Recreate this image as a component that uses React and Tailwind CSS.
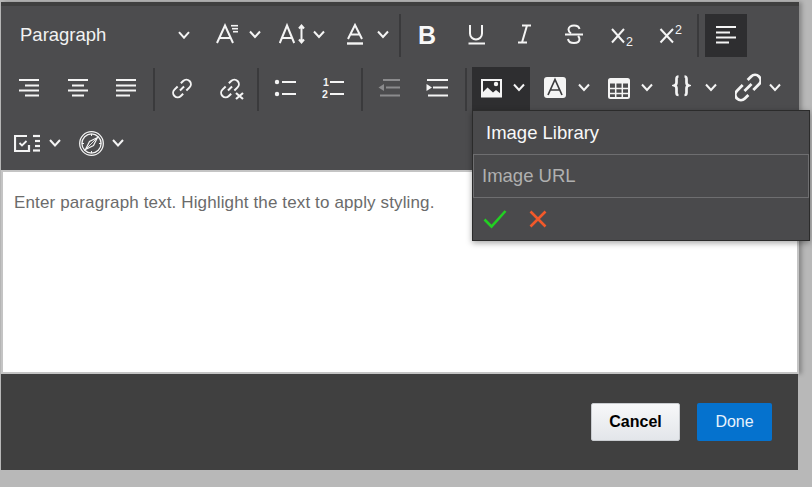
const C = "#f4f4f4";

function Ic({ w, className = "", children }) {
  return (
    <svg width={w} height="44" viewBox={`0 0 ${w} 44`} fill="none" stroke={C} strokeWidth="2" className={`shrink-0 ${className}`}>
      {children}
    </svg>
  );
}
function Chev({ className = "", y = 21.5 }) {
  return (
    <Ic w={12} className={className}>
      <path d={`M1 ${y - 3} L6 ${y + 2.5} L11 ${y - 3}`} strokeWidth="2" />
    </Ic>
  );
}
function Sep({ className = "" }) {
  return <div className={`w-[2px] h-[43px] bg-[#3a3a3c] shrink-0 ${className}`} />;
}
function Lines({ rows, sw = 2, color }) {
  return rows.map(([x1, x2, y], i) => (
    <path key={i} d={`M${x1} ${y} H${x2}`} strokeWidth={sw} stroke={color || C} />
  ));
}
function LinkShape({ cx = 10, cy = 21.5, s = 1 }) {
  return (
    <g transform={`translate(${cx} ${cy}) rotate(-45) scale(${s})`}>
      <path d="M-2 -5.5 H-7.5 a5.5 5.5 0 0 0 0 11 H-3.5" strokeWidth="2.4" />
      <path d="M2 5.5 H7.5 a5.5 5.5 0 0 0 0 -11 H3.5" strokeWidth="2.4" />
      <path d="M-3.5 0 H3.5" strokeWidth="2.4" />
    </g>
  );
}

export default function App() {
  return (
    <div className="w-[812px] h-[487px] bg-[#b8b8b8] pt-[2px] pl-[1px] overflow-hidden" style={{ fontFamily: '"Liberation Sans", Arial, sans-serif' }}>
      <div className="relative w-[798px]">
        <div className="shadow-[3px_0_4px_rgba(0,0,0,0.25)]">
          <div className="h-[4px] bg-[#3f3f3f]" />
          <div className="h-[164px] bg-[#4c4c4e] pt-[7px]">
            {/* row 1 */}
            <div className="flex h-[44px] items-center pl-[5px]">
              <div className="w-[196px] flex items-center justify-between pl-[14px] pr-[12px] text-[18.5px] text-[#f2f2f2] shrink-0">
                <span>Paragraph</span>
                <svg width="12" height="8" viewBox="0 0 12 8" fill="none" stroke={C} strokeWidth="2"><path d="M1 1.2 L6 6.7 L11 1.2" /></svg>
              </div>
              <Ic w={22} className="ml-[14px]">
                <path d="M1 30 L9 12.5 L17 30 M3.5 25 H14.5" />
                <Lines rows={[[15, 22, 12.7], [16, 22, 15.7], [17, 22, 18.7]]} sw={1.6} />
              </Ic>
              <Chev className="ml-[11px]" />
              <Ic w={26} className="ml-[18px]">
                <path d="M0.8 30 L8 12.5 L15.2 30 M3 25 H13" />
                <path d="M22.5 13 V29 M20 15.5 L22.5 12.5 L25 15.5 M20 26.5 L22.5 29.5 L25 26.5" />
              </Ic>
              <Chev className="ml-[8px]" />
              <Ic w={18} className="ml-[21px]">
                <path d="M2 26 L9 12 L16 26 M4.2 21.5 H13.8" />
                <path d="M1 30.5 H17" strokeWidth="2.4" />
              </Ic>
              <Chev className="ml-[13px]" />
              <Sep className="ml-[10px]" />
              <span className="ml-[16px] w-[20px] text-center text-[25px] leading-none font-bold text-[#f8f8f8] shrink-0">B</span>
              <Ic w={20} className="ml-[29px]">
                <path d="M4 12 V20.5 a6 6 0 0 0 12 0 V12" />
                <path d="M2.5 30.5 H19" />
              </Ic>
              <Ic w={20} className="ml-[28px]">
                <path d="M8 12.5 H17 M4 29.5 H13 M13 12.5 L8 29.5" />
              </Ic>
              <Ic w={20} className="ml-[30px]">
                <path d="M15.5 16 C15 13.5 12.5 12.5 10 12.5 C7 12.5 4.5 14 4.5 16.5 C4.5 18 5.5 19.5 7 20.5" />
                <path d="M14 23 C15 24 15.5 25 15.5 26 C15.5 29 13 30 10 30 C7 30 4.5 29 4 26" />
                <path d="M1 21.5 H19" />
              </Ic>
              <Ic w={24} className="ml-[25px]">
                <path d="M3 16 L15 29.5 M15 16 L3 29.5" />
                <text x="17" y="32.5" fontSize="12.5" fill={C} stroke="none" fontFamily="Liberation Sans">2</text>
              </Ic>
              <Ic w={24} className="ml-[26px]">
                <path d="M1.5 16 L14 29.5 M14 16 L1.5 29.5" />
                <text x="16" y="20.5" fontSize="12.5" fill={C} stroke="none" fontFamily="Liberation Sans">2</text>
              </Ic>
              <Sep className="ml-[14px]" />
              <div className="ml-[6px] w-[42px] h-[43px] bg-[#2e2e30] flex items-center justify-center shrink-0">
                <Ic w={20}>
                  <Lines rows={[[0, 20, 14], [0, 14, 19.5], [0, 20, 24.5], [0, 13, 29.5]]} />
                </Ic>
              </div>
            </div>

            {/* row 2 */}
            <div className="flex h-[44px] items-center pl-[5px] mt-[10px]">
              <Ic w={20} className="ml-[13px]">
                <Lines rows={[[0, 20, 13], [6, 20, 18.5], [0, 20, 23.5], [6, 20, 28.5]]} />
              </Ic>
              <Ic w={20} className="ml-[29px]">
                <Lines rows={[[0, 20, 13], [4, 16, 18.5], [0, 20, 23.5], [4, 16, 28.5]]} />
              </Ic>
              <Ic w={20} className="ml-[28px]">
                <Lines rows={[[0, 20, 13], [0, 20, 18.5], [0, 20, 23.5], [0, 14, 28.5]]} />
              </Ic>
              <Sep className="ml-[17px]" />
              <Ic w={20} className="ml-[17px]"><LinkShape cx={10} cy={21.5} s={0.82} /></Ic>
              <Ic w={24} className="ml-[28px]">
                <LinkShape cx={10} cy={21.5} s={0.82} />
                <path d="M16 26 L23 32 M23 26 L16 32" strokeWidth="2.2" />
              </Ic>
              <Sep className="ml-[13px]" />
              <Ic w={22} className="ml-[15px]">
                <circle cx="3" cy="15" r="2.2" fill={C} stroke="none" />
                <circle cx="3" cy="27" r="2.2" fill={C} stroke="none" />
                <Lines rows={[[8, 22, 15], [8, 22, 27]]} />
              </Ic>
              <Ic w={22} className="ml-[26px]">
                <text x="1" y="19" fontSize="10.5" fontWeight="700" fill={C} stroke="none" fontFamily="Liberation Sans">1</text>
                <text x="0" y="31" fontSize="10.5" fontWeight="700" fill={C} stroke="none" fontFamily="Liberation Sans">2</text>
                <Lines rows={[[8, 22, 15], [8, 22, 27]]} />
              </Ic>
              <Sep className="ml-[17px]" />
              <Ic w={22} className="ml-[15px]">
                <Lines color="#8b8b8d" rows={[[5, 22, 13], [8, 22, 20.5], [2, 22, 28.5]]} />
                <path d="M6 17 V24 L0.5 20.5 Z" fill="#8b8b8d" stroke="none" />
              </Ic>
              <Ic w={22} className="ml-[26px]">
                <Lines rows={[[1, 22, 13], [7, 22, 20.5], [2, 22, 28.5]]} />
                <path d="M0.5 17 V24 L6 20.5 Z" fill={C} stroke="none" />
              </Ic>
              <Sep className="ml-[17px]" />
              <div className="ml-[5px] w-[58px] h-[44px] bg-[#2e2e30] flex items-center pl-[9px] shrink-0">
                <Ic w={21}>
                  <rect x="1" y="13" width="19" height="16.5" strokeWidth="2" />
                  <path d="M1 30 V26 L6.5 20.5 L12 25.5 L15 23 L20 27 V30 Z" fill={C} stroke="none" />
                  <circle cx="15" cy="17" r="2.2" fill={C} stroke="none" />
                </Ic>
                <Chev className="ml-[11px]" y={20.5} />
              </div>
              <Ic w={22} className="ml-[14px]">
                <rect x="0" y="10" width="22" height="21" rx="3" fill={C} stroke="none" />
                <path d="M4 28 L11 12.5 L18 28 M6.5 23 H15.5" stroke="#3c3c3e" strokeWidth="1.7" />
              </Ic>
              <Chev className="ml-[12px]" y={20.5} />
              <Ic w={22} className="ml-[18px]">
                <rect x="1" y="12" width="20" height="19" rx="1.5" strokeWidth="2" />
                <rect x="1" y="12" width="20" height="4.5" fill={C} stroke="none" />
                <path d="M1 21.5 H21 M1 26.5 H21 M7.7 16 V31 M14.3 16 V31" strokeWidth="1.5" />
              </Ic>
              <Chev className="ml-[11px]" y={20.5} />
              <Ic w={19} className="ml-[19px]">
                <path d="M6.5 9.5 C4.5 9.5 4.5 10.5 4.5 12 V15.5 C4.5 17.5 4 18 2.5 18.5 C4 19 4.5 19.5 4.5 21.5 V25.5 C4.5 27 4.5 28 6.5 28" strokeWidth="2.7" />
                <path d="M12.5 9.5 C14.5 9.5 14.5 10.5 14.5 12 V15.5 C14.5 17.5 15 18 16.5 18.5 C15 19 14.5 19.5 14.5 21.5 V25.5 C14.5 27 14.5 28 12.5 28" strokeWidth="2.7" />
              </Ic>
              <Chev className="ml-[14px]" y={20.5} />
              <Ic w={26} className="ml-[18px]">
                <g transform="translate(13 20.5) rotate(-45)">
                  <path d="M-2 -5.5 H-10 a5.5 5.5 0 0 0 0 11 H-5" strokeWidth="2.8" />
                  <path d="M2 5.5 H10 a5.5 5.5 0 0 0 0 -11 H5" strokeWidth="2.8" />
                  <path d="M-5 0 H5" strokeWidth="2.8" />
                </g>
              </Ic>
              <Chev className="ml-[8px]" y={20.5} />
            </div>

            {/* row 3 */}
            <div className="flex h-[44px] items-center pl-[5px] mt-[10px]">
              <Ic w={27} className="ml-[8px]">
                <path d="M13 15 H1 V30 H15 V24" strokeWidth="2.2" />
                <path d="M5.5 22 L8 24.5 L12.5 20" strokeWidth="1.8" />
                <Lines rows={[[19, 26, 15], [21, 26, 20], [21, 26, 25], [19, 26, 29.5]]} sw={2.2} />
              </Ic>
              <Chev className="ml-[8px]" y={22} />
              <Ic w={25} className="ml-[18px]">
                <circle cx="12.5" cy="22.5" r="11.8" strokeWidth="1.3" />
                <circle cx="12.5" cy="22.5" r="9.6" strokeWidth="1.3" />
                <path d="M18.5 16.5 L14.5 24.5 L6.5 28.5 L10.5 20.5 Z" strokeWidth="1.2" />
                <path d="M6.5 28.5 L18.5 16.5" strokeWidth="0.9" />
                <path d="M12.5 13 V15 M12.5 30 V32 M3 22.5 H5 M20 22.5 H22" strokeWidth="1" />
              </Ic>
              <Chev className="ml-[8px]" y={22} />
            </div>
          </div>

          <div className="h-[204px] bg-white border-2 border-[#c4c4c4] pl-[11px] pt-[21px] text-[17px] leading-5 text-[#6b6b6b] tracking-[0.13px]">
            Enter paragraph text. Highlight the text to apply styling.
          </div>
        </div>

        <div className="w-[797px] h-[96px] bg-[#404040] flex items-start justify-end gap-[17px] pt-[29px] pr-[26px]">
          <button className="w-[89px] h-[38px] rounded-[2px] bg-gradient-to-b from-[#f7f8f9] to-[#e3e6ea] border border-[#c9ccd0] text-[16px] font-bold text-black">Cancel</button>
          <button className="w-[75px] h-[38px] rounded-[2px] bg-[#0572ce] text-[16px] text-[#e8f3fd]">Done</button>
        </div>

        <div className="absolute left-[471px] top-[108px] w-[338px] h-[131px] bg-[#4a4a4c] border border-[#2b2b2b] shadow-[0_2px_6px_rgba(0,0,0,0.35)] flex flex-col">
          <div className="h-[43px] flex items-center pl-[13px] text-[18.5px] text-[#f8f8f8]">Image Library</div>
          <div className="h-[44px] border border-[#6e6e70] flex items-center pl-[8px] text-[18.5px] text-[#b0b0b0]">Image URL</div>
          <div className="flex-1 flex items-center pl-[10px]">
            <svg width="24" height="20" viewBox="0 0 24 20" fill="none" stroke="#22cf22" strokeWidth="2.6"><path d="M1.5 10.5 L8.5 17.5 L22.5 2" /></svg>
            <svg width="18" height="18" viewBox="0 0 18 18" fill="none" stroke="#f2592a" strokeWidth="2.6" className="ml-[22px]"><path d="M1.5 1.5 L16.5 16.5 M16.5 1.5 L1.5 16.5" /></svg>
          </div>
        </div>
      </div>
    </div>
  );
}
